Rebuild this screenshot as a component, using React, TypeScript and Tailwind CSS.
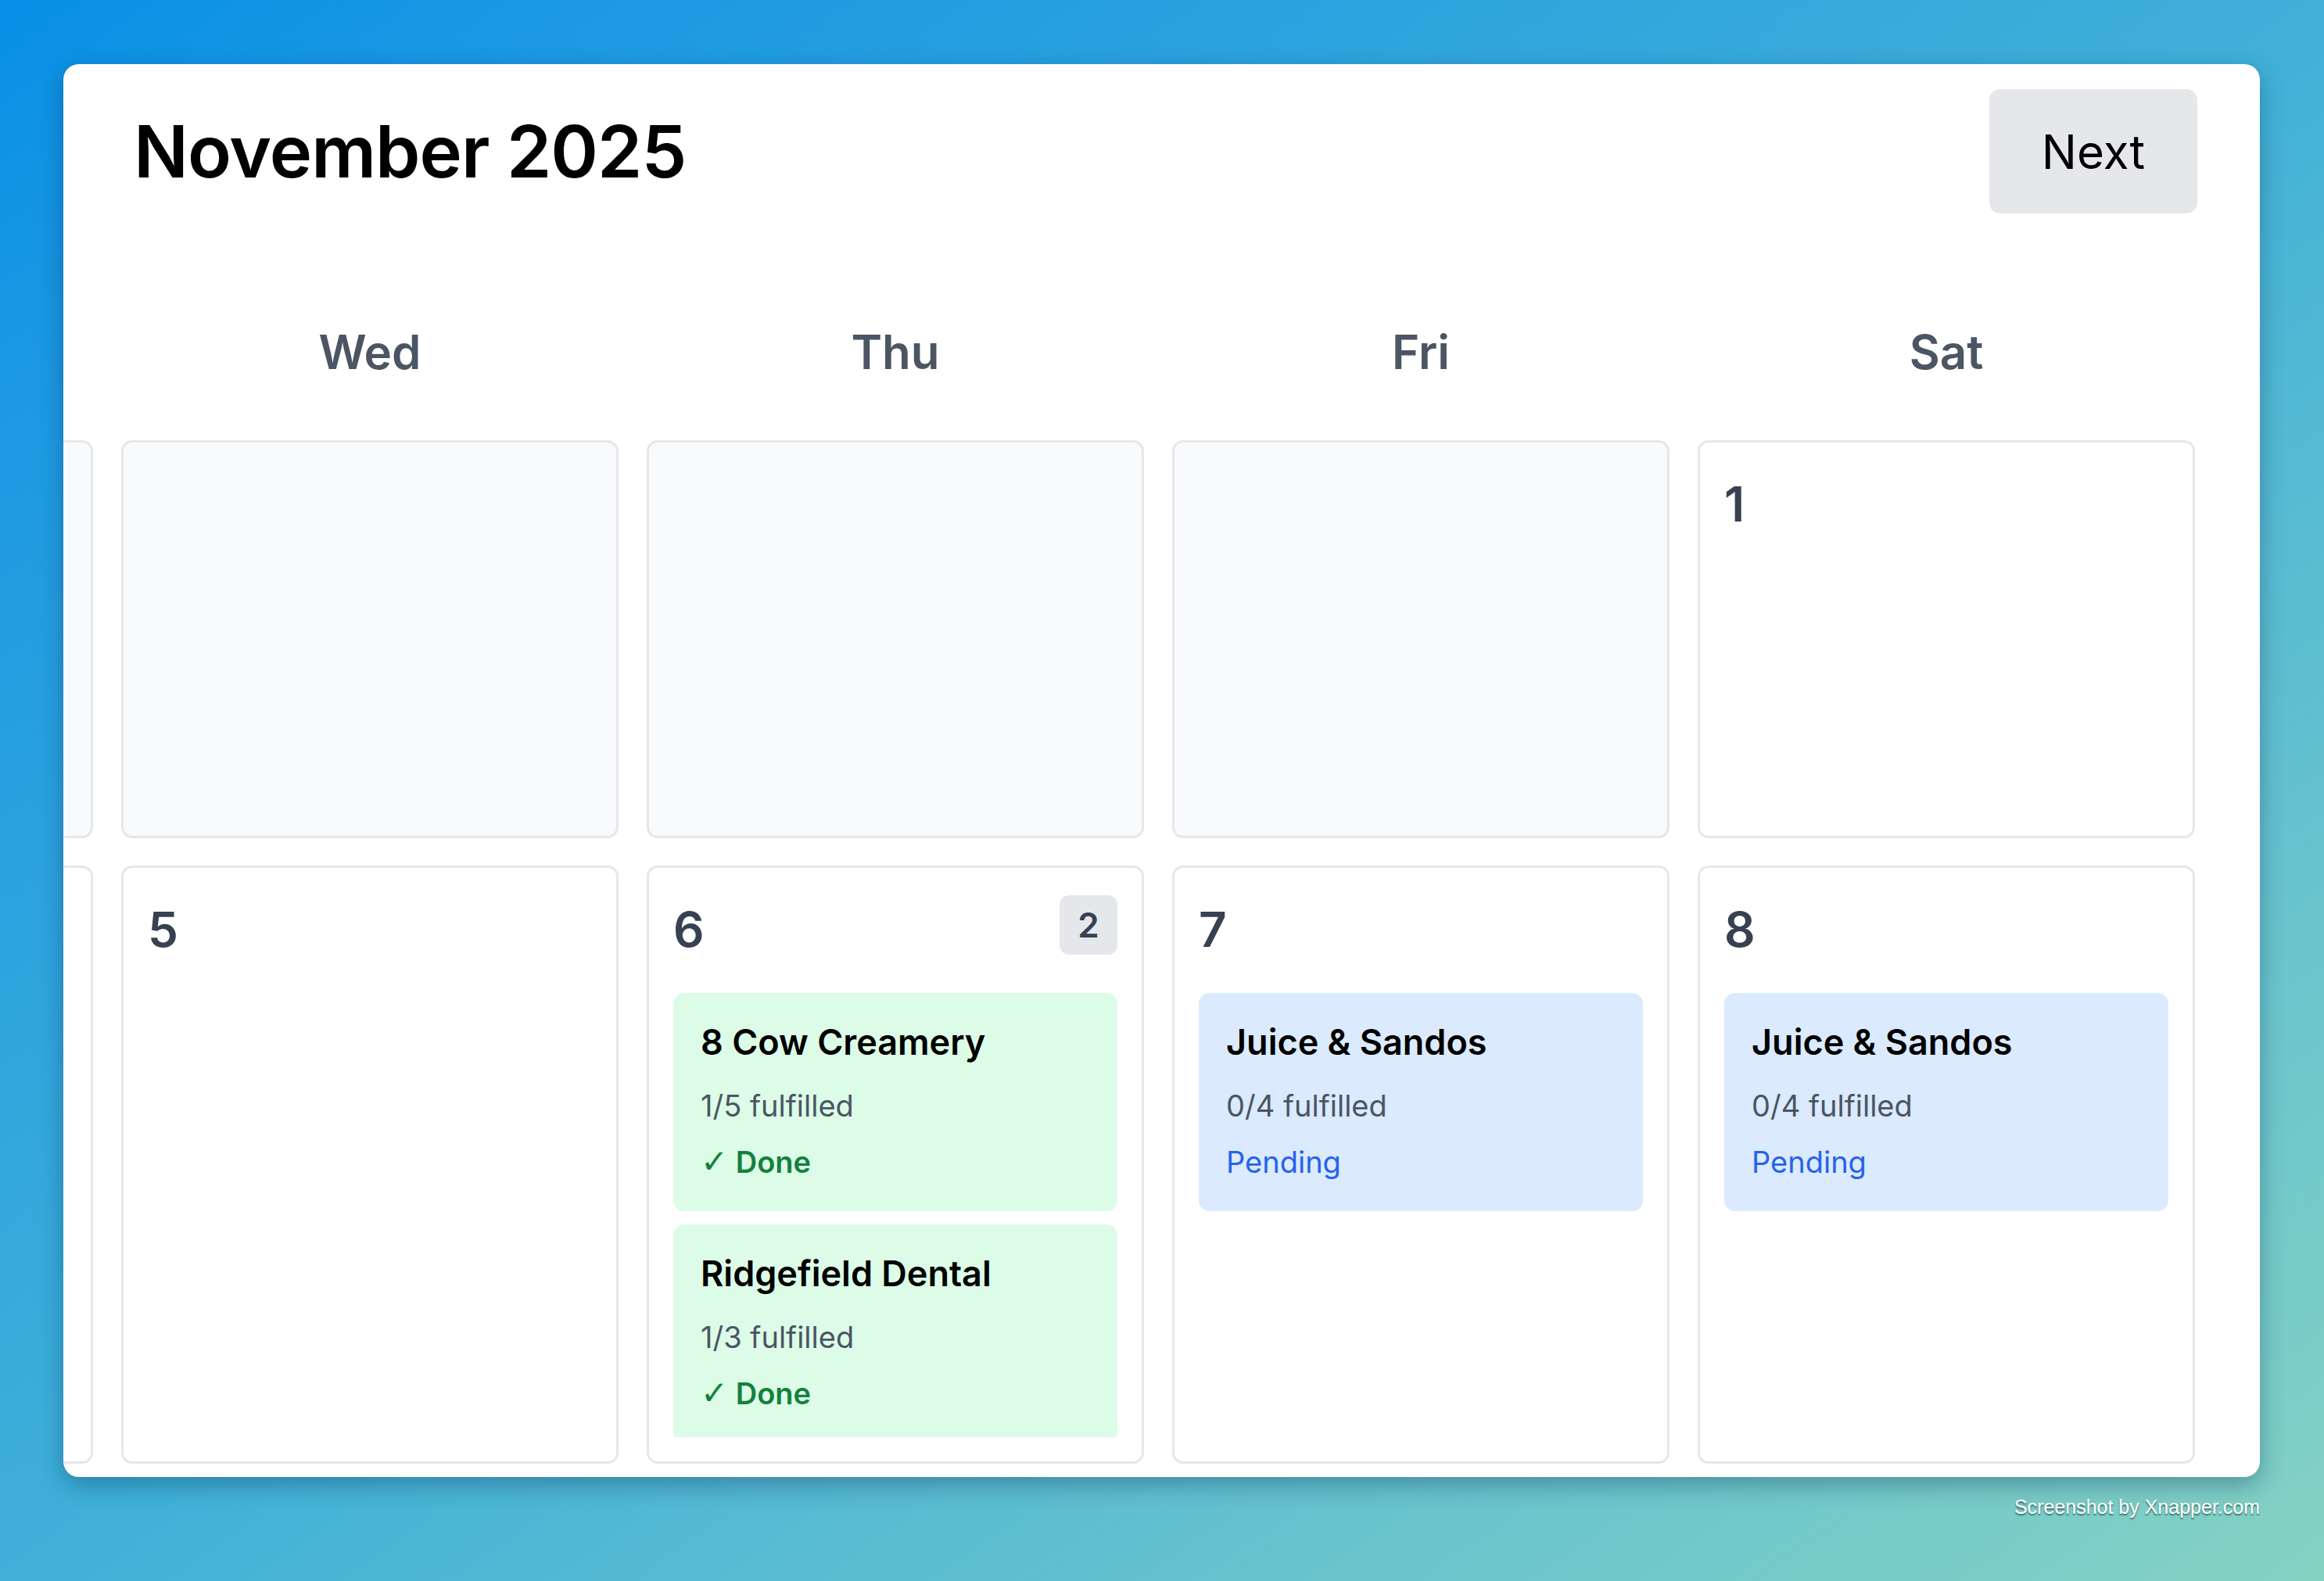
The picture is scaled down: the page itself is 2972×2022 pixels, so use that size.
import React from "react";

type CalEvent = {
  title: string;
  fulfilled: number;
  total: number;
  status: "done" | "pending";
};

type Day = { n?: number; muted?: boolean; events?: CalEvent[] };

const weekdays = ["", "", "", "Wed", "Thu", "Fri", "Sat"];

const juice: CalEvent = { title: "Juice & Sandos", fulfilled: 0, total: 4, status: "pending" };

const rows: Day[][] = [
  [
    { muted: true },
    { muted: true },
    { muted: true },
    { muted: true },
    { muted: true },
    { muted: true },
    { n: 1 },
  ],
  [
    {},
    {},
    {},
    { n: 5 },
    {
      n: 6,
      events: [
        { title: "8 Cow Creamery", fulfilled: 1, total: 5, status: "done" },
        { title: "Ridgefield Dental", fulfilled: 1, total: 3, status: "done" },
      ],
    },
    { n: 7, events: [juice] },
    { n: 8, events: [juice] },
  ],
];

function EventCard({ ev }: { ev: CalEvent }) {
  const done = ev.status === "done";
  return (
    <div
      className={`shrink-0 rounded-[14px] px-[35px] pt-[35px] pb-[39px] ${
        done ? "bg-[#dcfce7]" : "bg-[#dbeafe]"
      }`}
    >
      <h3 className="text-[45px] leading-[56px] font-semibold text-black">{ev.title}</h3>
      <p className="mt-[29px] text-[38px] leading-[48px] text-[#4b5563]">
        {ev.fulfilled}/{ev.total} fulfilled
      </p>
      {done ? (
        <p className="mt-[24px] text-[38px] leading-[48px] font-semibold text-[#15803d]">
          <span className="text-[42px] font-bold [font-family:'DejaVu_Sans',sans-serif]">✓</span> Done
        </p>
      ) : (
        <p className="mt-[24px] text-[38px] leading-[48px] text-[#2563eb]">Pending</p>
      )}
    </div>
  );
}

function DayCell({ day }: { day: Day }) {
  const count = day.events?.length ?? 0;
  return (
    <div
      className={`flex min-h-0 flex-col overflow-hidden rounded-[14px] border-[3px] border-[#e5e7eb] p-[31px] ${
        day.muted ? "bg-[#f9fafb]" : "bg-white"
      }`}
    >
      {day.n && (
        <div className="mb-[49px] flex h-[80px] shrink-0 items-start justify-between">
          <span className="pt-[12px] text-[62px] leading-[72px] font-semibold text-[#374151]">
            {day.n}
          </span>
          {count > 1 && (
            <span className="mt-[4px] flex h-[76px] w-[74px] items-center justify-center rounded-[12px] bg-[#e5e7eb] text-[44px] font-semibold text-[#374151]">
              {count}
            </span>
          )}
        </div>
      )}
      {count > 0 && (
        <div className="flex min-h-0 flex-1 flex-col gap-[17px] overflow-hidden">
          {day.events!.map((ev, i) => (
            <EventCard key={i} ev={ev} />
          ))}
        </div>
      )}
    </div>
  );
}

export default function App() {
  return (
    <div className="min-h-screen w-full bg-linear-to-br from-[#0690e6] via-[#3fb0d8] to-[#84d2c3] pt-[82px] pl-[81px] [font-family:Inter,sans-serif]">
      <div className="flex h-[1807px] w-[2809px] flex-col overflow-hidden rounded-[20px] bg-white pt-[32px] pb-[17px] shadow-[0_10px_30px_rgba(0,40,80,0.35)]">
        <header className="flex h-[159px] shrink-0 items-center justify-between pr-[80px] pl-[90px]">
          <h1 className="text-[92px] leading-[92px] font-semibold tracking-[-0.01em] text-black">
            November 2025
          </h1>
          <button className="flex h-[159px] w-[266px] items-center justify-center rounded-[14px] bg-[#e5e7eb] text-[60px] text-black">
            Next
          </button>
        </header>

        <div className="mt-[141px] mr-[83px] flex justify-end overflow-hidden">
          <div className="w-[4668px] shrink-0">
            <div className="mb-[77px] grid h-[72px] grid-cols-[repeat(7,636px)] gap-x-[36px]">
              {weekdays.map((d, i) => (
                <div
                  key={i}
                  className="text-center text-[60px] leading-[72px] font-semibold text-[#4b5563]"
                >
                  {d}
                </div>
              ))}
            </div>
            <div className="grid grid-cols-[repeat(7,636px)] grid-rows-[509px_765px] gap-x-[36px] gap-y-[35px]">
              {rows.flat().map((day, i) => (
                <DayCell key={i} day={day} />
              ))}
            </div>
          </div>
        </div>
      </div>

      <div className="mt-[23px] flex w-[2809px] justify-end">
        <span className="text-[25px] leading-[30px] font-normal text-white [font-family:'Liberation_Sans',Arial,sans-serif] [text-shadow:0_2px_2px_rgba(0,0,0,0.5)]">
          Screenshot by Xnapper.com
        </span>
      </div>
    </div>
  );
}
